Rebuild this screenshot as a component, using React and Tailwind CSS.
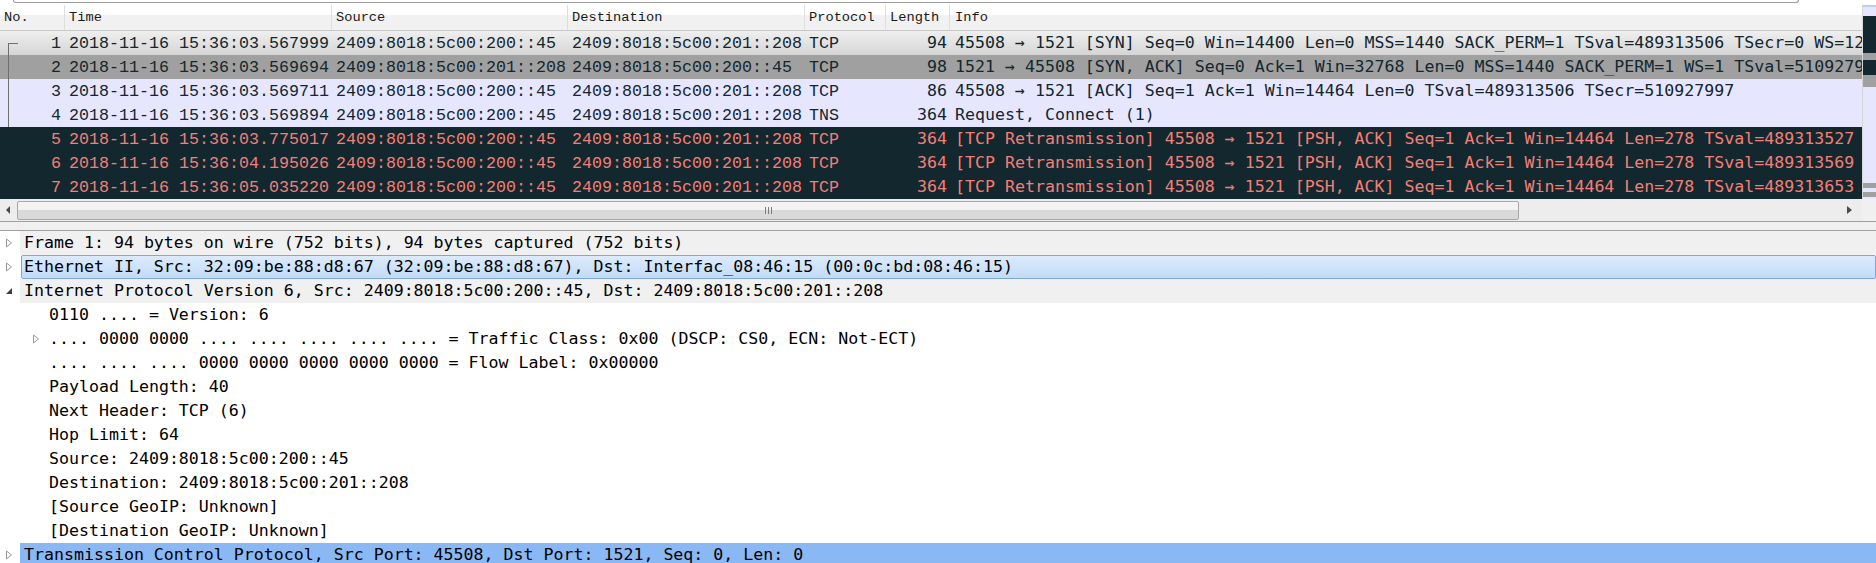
import React from 'react';

const packets = [
  { no: 1, time: '2018-11-16 15:36:03.567999', src: '2409:8018:5c00:200::45', dst: '2409:8018:5c00:201::208', proto: 'TCP', len: 94, info: '45508 → 1521 [SYN] Seq=0 Win=14400 Len=0 MSS=1440 SACK_PERM=1 TSval=489313506 TSecr=0 WS=128', kind: 'selected' },
  { no: 2, time: '2018-11-16 15:36:03.569694', src: '2409:8018:5c00:201::208', dst: '2409:8018:5c00:200::45', proto: 'TCP', len: 98, info: '1521 → 45508 [SYN, ACK] Seq=0 Ack=1 Win=32768 Len=0 MSS=1440 SACK_PERM=1 WS=1 TSval=510927997 TSecr=489313506', kind: 'syn' },
  { no: 3, time: '2018-11-16 15:36:03.569711', src: '2409:8018:5c00:200::45', dst: '2409:8018:5c00:201::208', proto: 'TCP', len: 86, info: '45508 → 1521 [ACK] Seq=1 Ack=1 Win=14464 Len=0 TSval=489313506 TSecr=510927997', kind: 'tcp' },
  { no: 4, time: '2018-11-16 15:36:03.569894', src: '2409:8018:5c00:200::45', dst: '2409:8018:5c00:201::208', proto: 'TNS', len: 364, info: 'Request, Connect (1)', kind: 'tcp' },
  { no: 5, time: '2018-11-16 15:36:03.775017', src: '2409:8018:5c00:200::45', dst: '2409:8018:5c00:201::208', proto: 'TCP', len: 364, info: '[TCP Retransmission] 45508 → 1521 [PSH, ACK] Seq=1 Ack=1 Win=14464 Len=278 TSval=489313527 TSecr=510927997', kind: 'bad' },
  { no: 6, time: '2018-11-16 15:36:04.195026', src: '2409:8018:5c00:200::45', dst: '2409:8018:5c00:201::208', proto: 'TCP', len: 364, info: '[TCP Retransmission] 45508 → 1521 [PSH, ACK] Seq=1 Ack=1 Win=14464 Len=278 TSval=489313569 TSecr=510927997', kind: 'bad' },
  { no: 7, time: '2018-11-16 15:36:05.035220', src: '2409:8018:5c00:200::45', dst: '2409:8018:5c00:201::208', proto: 'TCP', len: 364, info: '[TCP Retransmission] 45508 → 1521 [PSH, ACK] Seq=1 Ack=1 Win=14464 Len=278 TSval=489313653 TSecr=510927997', kind: 'bad' },
];

const rowStyles = {
  selected: 'bg-[linear-gradient(to_bottom,#efefef,#d5d5d5)] text-[#12272e]',
  syn: 'bg-[#a0a0a0] text-[#12272e]',
  tcp: 'bg-[#e7e6ff] text-[#12272e]',
  bad: 'bg-[#12272e] text-[#f37f77]',
};

const details = [
  { level: 0, tri: 'closed', bg: 'gray', text: 'Frame 1: 94 bytes on wire (752 bits), 94 bytes captured (752 bits)' },
  { level: 0, tri: 'closed', bg: 'hover', text: 'Ethernet II, Src: 32:09:be:88:d8:67 (32:09:be:88:d8:67), Dst: Interfac_08:46:15 (00:0c:bd:08:46:15)' },
  { level: 0, tri: 'open', bg: 'gray', text: 'Internet Protocol Version 6, Src: 2409:8018:5c00:200::45, Dst: 2409:8018:5c00:201::208' },
  { level: 1, text: '0110 .... = Version: 6' },
  { level: 1, tri: 'closed', text: '.... 0000 0000 .... .... .... .... .... = Traffic Class: 0x00 (DSCP: CS0, ECN: Not-ECT)' },
  { level: 1, text: '.... .... .... 0000 0000 0000 0000 0000 = Flow Label: 0x00000' },
  { level: 1, text: 'Payload Length: 40' },
  { level: 1, text: 'Next Header: TCP (6)' },
  { level: 1, text: 'Hop Limit: 64' },
  { level: 1, text: 'Source: 2409:8018:5c00:200::45' },
  { level: 1, text: 'Destination: 2409:8018:5c00:201::208' },
  { level: 1, text: '[Source GeoIP: Unknown]' },
  { level: 1, text: '[Destination GeoIP: Unknown]' },
  { level: 0, tri: 'closed', bg: 'selected', text: 'Transmission Control Protocol, Src Port: 45508, Dst Port: 1521, Seq: 0, Len: 0' },
];

// minimap blocks on the vertical scrollbar, top to bottom
const minimap = [
  ['h-[2px]', 'bg-[#b8cfee]'],
  ['h-[9px]', 'bg-[#e7e6ff]'],
  ['h-[37px]', 'bg-[#12272e]'],
  ['h-[7px]', 'bg-[#a0a0a0]'],
  ['h-[15px]', 'bg-[#12272e]'],
  ['h-[12px]', 'bg-[#a0a0a0]'],
  ['h-[96px]', 'bg-[#e7e6ff]'],
  ['h-[5px]', 'bg-[#a0a0a0]'],
  ['h-[4px]', 'bg-[#e7e6ff]'],
  ['h-[5px]', 'bg-[#a0a0a0]'],
  ['h-[2px]', 'bg-[#e7e6ff]'],
];

const ClosedArrow = () => (
  <svg width="8" height="10" viewBox="0 0 8 10">
    <polygon points="1.5,1 6.5,5 1.5,9" fill="#fff" stroke="#9a9a9a" strokeWidth="1" />
  </svg>
);

const OpenArrow = () => (
  <svg width="8" height="10" viewBox="0 0 8 10">
    <polygon points="7,2 7,8 1,8" fill="#3c3c3c" />
  </svg>
);

// related-packet bracket in the No. column (dark on the dark rows, so left out there)
const RelLine = ({ no, kind }) => {
  if (kind === 'bad') return null;
  if (no === 1) {
    return (
      <>
        <span className="absolute left-[8px] top-[12px] w-[10px] h-px bg-[#6e6e6e]" />
        <span className="absolute left-[8px] top-[12px] bottom-0 w-px bg-[#6e6e6e]" />
      </>
    );
  }
  return <span className="absolute left-[8px] top-0 bottom-0 w-px bg-[#6e6e6e]" />;
};

const mono = "font-['Liberation_Mono',monospace] text-[16.67px]";
const dejavu = "font-['DejaVu_Sans_Mono',monospace] text-[16.6px]";

const App = () => {
  return (
    <div className="w-[1876px] h-[563px] overflow-hidden bg-white font-['DejaVu_Sans_Mono',monospace]">
      {/* bottom edge of the filter box above */}
      <div className="h-[5px] pl-[13px]">
        <div className="w-[1786px] h-[3px] border-x border-b border-[#9c9c9c] rounded-b-[3px]" />
      </div>

      {/* packet list */}
      <div className="flex">
        <div className="w-[1862px] overflow-hidden">
          <div className="flex h-[26px] border-b border-[#c8c8c8] bg-[linear-gradient(to_bottom,#ffffff_40%,#f1f1f2_40%)] font-['Liberation_Mono',monospace] text-[13.7px] text-[#1a1a1a] whitespace-nowrap">
            <div className="w-[65px] shrink-0 pl-[4px] pt-[2px] flex items-center border-r border-[#dedede]">No.</div>
            <div className="w-[267px] shrink-0 pl-[4px] pt-[2px] flex items-center border-r border-[#dedede]">Time</div>
            <div className="w-[236px] shrink-0 pl-[4px] pt-[2px] flex items-center border-r border-[#dedede]">Source</div>
            <div className="w-[237px] shrink-0 pl-[4px] pt-[2px] flex items-center border-r border-[#dedede]">Destination</div>
            <div className="w-[81px] shrink-0 pl-[4px] pt-[2px] flex items-center border-r border-[#dedede]">Protocol</div>
            <div className="w-[64px] shrink-0 pl-[4px] pt-[2px] flex items-center border-r border-[#dedede]">Length</div>
            <div className="flex-1 pl-[5px] pt-[2px] flex items-center">Info</div>
          </div>

          {packets.map((p) => (
            <div key={p.no} className={`flex h-[24px] items-center whitespace-nowrap ${rowStyles[p.kind]}`}>
              <div className={`relative w-[65px] h-full shrink-0 pr-[4px] flex items-center justify-end ${mono}`}>
                <RelLine no={p.no} kind={p.kind} />
                {p.no}
              </div>
              <div className={`w-[267px] shrink-0 pl-[4px] overflow-hidden ${mono}`}>{p.time}</div>
              <div className={`w-[236px] shrink-0 pl-[4px] overflow-hidden ${mono}`}>{p.src}</div>
              <div className={`w-[237px] shrink-0 pl-[4px] overflow-hidden ${mono}`}>{p.dst}</div>
              <div className={`w-[81px] shrink-0 pl-[4px] overflow-hidden ${mono}`}>{p.proto}</div>
              <div className={`w-[64px] shrink-0 pr-[3px] text-right ${dejavu}`}>{p.len}</div>
              <div className={`flex-1 pl-[5px] overflow-hidden ${dejavu}`}>{p.info}</div>
            </div>
          ))}
        </div>

        <div className="w-[14px] flex flex-col border-l border-[#d6d6d6]">
          {minimap.map(([h, c], i) => (
            <div key={i} className={`${h} ${c}`} />
          ))}
        </div>
      </div>

      {/* horizontal scrollbar */}
      <div className="flex h-[23px] border-b border-[#a0a0a0]">
        <div className="w-[1862px] flex items-center bg-[#ededed]">
          <div className="w-[17px] flex justify-center">
            <svg width="5" height="8" viewBox="0 0 5 8"><polygon points="4,0 4,8 0,4" fill="#4a4a4a" /></svg>
          </div>
          <div className="w-[1502px] h-[19px] rounded-[2px] border border-[#a8a8a8] bg-[linear-gradient(to_bottom,#f3f3f3_45%,#d9d9d9_45%)] flex items-center justify-center gap-[2px]">
            <span className="w-px h-[7px] bg-[#7c7c7c]" />
            <span className="w-px h-[7px] bg-[#7c7c7c]" />
            <span className="w-px h-[7px] bg-[#7c7c7c]" />
          </div>
          <div className="flex-1" />
          <div className="w-[17px] flex justify-start pl-[2px]">
            <svg width="5" height="8" viewBox="0 0 5 8"><polygon points="0,0 0,8 5,4" fill="#4a4a4a" /></svg>
          </div>
        </div>
        <div className="w-[14px] bg-[#f0f0f0]" />
      </div>

      {/* pane splitter */}
      <div className="h-[9px] bg-[#f0f0f0] border-b border-[#a0a0a0]" />

      {/* packet details */}
      <div className="text-[16.6px] text-black">
        {details.map((d, i) => {
          let bg = 'bg-white';
          if (d.bg === 'gray') bg = 'bg-[#f0f0f0]';
          if (d.bg === 'selected') bg = 'bg-[#8ab8f4]';
          if (d.bg === 'hover') bg = 'bg-[linear-gradient(to_bottom,#dcebfc,#c2dbf8)] border border-[#80a7d8] rounded-[2px] ml-[1px]';
          return (
            <div key={i} className="flex h-[24px] whitespace-nowrap">
              <div className="w-[20px] shrink-0 flex items-center pl-[5px]">
                {d.level === 0 && d.tri === 'closed' && <ClosedArrow />}
                {d.level === 0 && d.tri === 'open' && <OpenArrow />}
              </div>
              <div className={`flex-1 flex items-center overflow-hidden ${bg} ${d.bg === 'hover' ? 'pl-[2px]' : 'pl-[4px]'}`}>
                {d.level === 1 && (
                  <div className="w-[25px] shrink-0 flex items-center pl-[8px]">
                    {d.tri === 'closed' && <ClosedArrow />}
                  </div>
                )}
                <span>{d.text}</span>
              </div>
            </div>
          );
        })}
      </div>
    </div>
  );
};

export default App;
